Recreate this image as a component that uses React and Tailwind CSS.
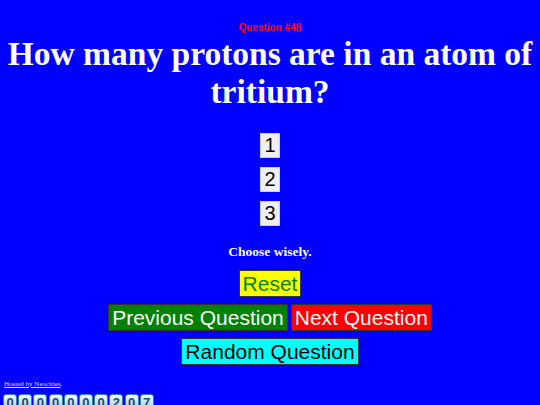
export default function App() {
  const digits = "0000000207".split("");
  return (
    <div className="w-[540px] h-[405px] overflow-hidden bg-[#0000ff] flex flex-col" style={{ fontFamily: '"Liberation Serif", serif' }}>
      <div className="flex flex-col items-center pt-[22px]">
        <p className="text-[10px] leading-[12px] font-bold text-[#ff0000]" style={{ fontFamily: '"Liberation Sans", Arial, sans-serif' }}>
          Question #48
        </p>
        <h1 className="mt-[1px] text-[33.5px] leading-[38px] font-bold text-white text-center">
          How many protons are in an atom of tritium?
        </h1>

        <div className="mt-[22px] flex flex-col items-center gap-[9px]" style={{ fontFamily: '"Liberation Sans", Arial, sans-serif' }}>
          {["1", "2", "3"].map((n) => (
            <button key={n} className="w-[20px] h-[25px] bg-[#efefef] border border-[#cfcfcf] text-[20px] leading-[23px] text-black text-center">
              {n}
            </button>
          ))}
        </div>

        <p className="mt-[18px] text-[13.5px] leading-[16px] font-bold text-white">Choose wisely.</p>

        <div className="mt-[10px] flex flex-col items-center gap-[7px]" style={{ fontFamily: '"Liberation Sans", Arial, sans-serif' }}>
          <button className="h-[27px] px-[3px] bg-[#ffff00] border border-[#333] text-[21px] leading-[25px] text-[#008000]">
            Reset
          </button>
          <div className="flex gap-[3px]">
            <button className="h-[27px] px-[3px] bg-[#008000] border border-[#333] text-[21px] leading-[25px] text-white">
              Previous Question
            </button>
            <button className="h-[27px] px-[3px] bg-[#ff0000] border border-[#333] text-[21px] leading-[25px] text-white">
              Next Question
            </button>
          </div>
          <button className="h-[27px] px-[3px] bg-[#00ffff] border border-[#333] text-[21px] leading-[25px] text-black">
            Random Question
          </button>
        </div>
      </div>

      <div className="mt-[15px] pl-[4px] text-[7px] leading-[9px] text-[#ddddff]">
        <a href="#" className="underline">Hosted by Neocities</a>.
      </div>
      <div className="mt-[5px] pl-[3px] flex gap-[1.2px] shrink-0">
        {digits.map((d, i) => (
          <div
            key={i}
            className="w-[14px] h-[20px] shrink-0 rounded-[3px] bg-gradient-to-b from-[#f4fbff] via-[#b8e0f5] to-[#5aa8d8] border border-[#3a7fb0] flex items-start justify-center text-[13px] leading-[16px] font-bold text-[#1b4a6e]"
            style={{ fontFamily: '"Liberation Sans", Arial, sans-serif' }}
          >
            {d}
          </div>
        ))}
      </div>
    </div>
  );
}
